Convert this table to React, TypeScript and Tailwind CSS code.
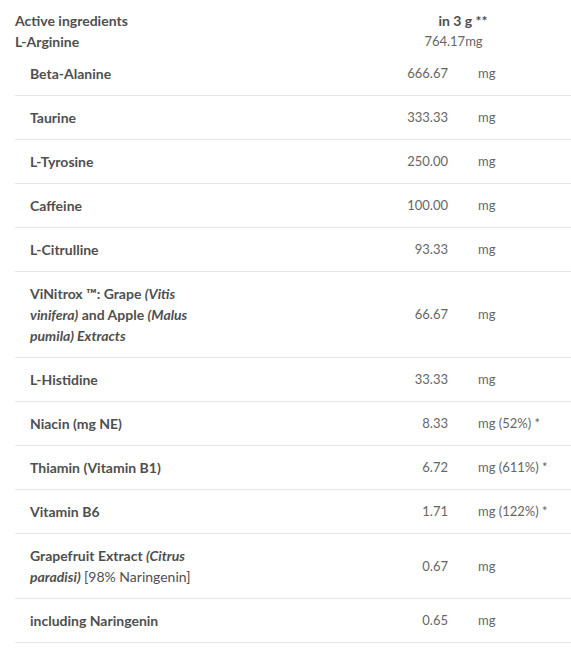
import React from 'react';

type Row = {
  name: React.ReactNode;
  value: string;
  unit: string;
};

const I = ({ children }: { children: React.ReactNode }) => <em className="italic">{children}</em>;

const rows: Row[] = [
  { name: 'Beta-Alanine', value: '666.67', unit: 'mg' },
  { name: 'Taurine', value: '333.33', unit: 'mg' },
  { name: 'L-Tyrosine', value: '250.00', unit: 'mg' },
  { name: 'Caffeine', value: '100.00', unit: 'mg' },
  { name: 'L-Citrulline', value: '93.33', unit: 'mg' },
  {
    name: (
      <>
        ViNitrox ™: Grape <I>(Vitis vinifera)</I> and Apple <I>(Malus pumila) Extracts</I>
      </>
    ),
    value: '66.67',
    unit: 'mg',
  },
  { name: 'L-Histidine', value: '33.33', unit: 'mg' },
  { name: 'Niacin (mg NE)', value: '8.33', unit: 'mg (52%) *' },
  { name: 'Thiamin (Vitamin B1)', value: '6.72', unit: 'mg (611%) *' },
  { name: 'Vitamin B6', value: '1.71', unit: 'mg (122%) *' },
  {
    name: (
      <>
        Grapefruit Extract <I>(Citrus paradisi)</I> <span className="font-normal">[98% Naringenin]</span>
      </>
    ),
    value: '0.67',
    unit: 'mg',
  },
  { name: 'including Naringenin', value: '0.65', unit: 'mg' },
];

export default function App() {
  return (
    <div
      className="min-h-[653px] w-[571px] bg-white pt-[10px] pl-[15px] text-[14px] leading-[21px] text-[#4f4f4f]"
      style={{ fontFamily: '"Lato", "Liberation Sans", sans-serif' }}
    >
      <div className="flex font-bold">
        <span className="w-[395px]">Active ingredients</span>
        <span className="w-[106px] text-center">in 3 g **</span>
      </div>
      <div className="flex">
        <span className="w-[385px] font-bold">L-Arginine</span>
        <span className="w-[107px] text-center text-[13px] text-[#666]">764.17mg</span>
      </div>
      <div>
        {rows.map((row, i) => (
          <div
            key={i}
            className="grid grid-cols-[230px_218px_1fr] border-b border-[#e6e6e6] py-[11px]"
          >
            <div className="pl-[15px] pr-[38px] font-bold">{row.name}</div>
            <div className="flex items-center justify-end pr-[15px] text-[13px] text-[#666]">{row.value}</div>
            <div className="flex items-center pl-[15px] text-[13px] text-[#666]">{row.unit}</div>
          </div>
        ))}
      </div>
    </div>
  );
}
